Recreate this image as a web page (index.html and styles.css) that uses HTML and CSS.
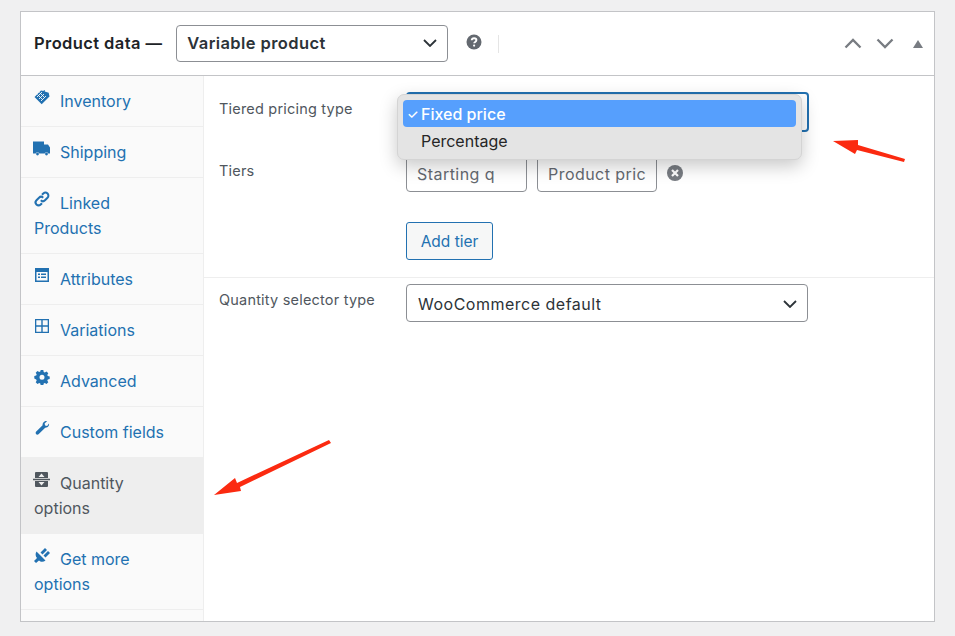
FILE: index.html
```html
<!DOCTYPE html>
<html lang="en">
<head>
<meta charset="utf-8">
<title>Product data</title>
<link rel="stylesheet" href="styles.css">
</head>
<body>
<section class="box">
  <header class="head">
    <h2 class="title">Product data —</h2>
    <div class="select type-select"><span>Variable product</span>
      <svg class="chev" viewBox="0 0 14 8"><path d="M1 1l6 6 6-6"/></svg>
    </div>
    <svg class="help" viewBox="0 0 16 16"><circle cx="8" cy="8" r="7.5"/><path class="q" d="M5.7 6.300C5.800 4.900 6.700 4.200 8.100 4.200c1.400 0 2.300.8 2.300 1.900 0 1.900-2.200 1.700-2.200 3.200"/><circle class="qd" cx="8.100" cy="11.600" r="1.100"/></svg>
    <span class="sep"></span>
    <div class="controls">
      <svg class="ctl" viewBox="0 0 18 11"><path d="M1.500 9.500L9 2l7.500 7.500"/></svg>
      <svg class="ctl" viewBox="0 0 18 11"><path d="M1.500 1.500L9 9l7.500-7.500"/></svg>
      <svg class="tri" viewBox="0 0 10 8"><path d="M5 0l5 8H0z"/></svg>
    </div>
  </header>
  <div class="body">
    <nav class="side">
      <a class="tab"><svg class="ico" viewBox="0 0 16 16"><path d="M7 1.500l2.500.6.500-1.100 1 .4-.3 1.100 4 1.200.8 3.800-7.800 7.800L.5 8z"/><path class="cut" d="M3 8l5-5M5 10l5-5M7 12l5-5M5.500 3.500l5 5M3.500 5.500l5 5"/></svg>Inventory</a>
      <a class="tab"><svg class="ico wide" viewBox="0 0 17 14"><path d="M0 0h11v3h4l2 3v6h-1.700a2 2 0 0 0-3.600 0H6.300a2 2 0 0 0-3.600 0H0z"/><circle cx="4.500" cy="12.500" r="1.400"/><circle cx="13.500" cy="12.500" r="1.400"/></svg>Shipping</a>
      <a class="tab"><svg class="ico line" viewBox="0 0 16 16"><path d="M6.800 9.300a3 3 0 0 0 4.200 0l2.500-2.500a3 3 0 0 0-4.200-4.300L8 3.800"/><path d="M9.200 6.700a3 3 0 0 0-4.200 0l-2.500 2.500a3 3 0 0 0 4.200 4.300L8 12.200"/></svg>Linked Products</a>
      <a class="tab"><svg class="ico" viewBox="0 0 16 16"><path fill-rule="evenodd" d="M1 1h14v14H1zM2.500 5v8.500h11V5zM4 6.500h2V8H4zm3 0h5V8H7zM4 9.500h2V11H4zm3 0h5V11H7z"/></svg>Attributes</a>
      <a class="tab"><svg class="ico" viewBox="0 0 16 16"><path fill-rule="evenodd" d="M1 1h14v14H1zM2.300 2.300v5h5v-5zm6.400 0v5h5v-5zM2.300 8.700v5h5v-5zm6.400 0v5h5v-5z"/></svg>Variations</a>
      <a class="tab"><svg class="ico" viewBox="0 0 16 16"><path fill-rule="evenodd" d="M6.700 1h2.600l.4 1.900 1.100.5 1.700-1 1.800 1.800-1 1.700.5 1.100 1.900.4v2.600l-1.900.4-.5 1.100 1 1.700-1.800 1.800-1.700-1-1.100.5-.4 1.900H6.700l-.4-1.900-1.100-.5-1.700 1-1.800-1.800 1-1.700-.5-1.100L.3 9.600V7l1.900-.4.500-1.100-1-1.700 1.800-1.800 1.700 1 1.100-.5zM8 5.800a2.500 2.500 0 1 0 0 5 2.500 2.500 0 0 0 0-5z"/></svg>Advanced</a>
      <a class="tab"><svg class="ico" viewBox="0 0 16 16"><path d="M15 3.500c.5 2-1.200 4.400-3.800 4.200L4.500 14.300c-1.500 1.300-3.800-.8-2.500-2.500l6.600-6.600C8.300 2.700 11 .6 13 1.200L10.600 3.600l.5 2 2 .5z"/></svg>Custom fields</a>
      <a class="tab active"><svg class="ico wide" viewBox="0 0 17 15"><path d="M3 0h11a1 1 0 0 1 1 1v5H2V1a1 1 0 0 1 1-1zM0 6.800h17v1.400H0zM2 9h13v5a1 1 0 0 1-1 1H3a1 1 0 0 1-1-1z"/><path class="cut" fill-rule="evenodd" d="M8.500 1.500L11.500 5h-6zM5.500 10h6l-3 3.500z"/></svg>Quantity options</a>
      <a class="tab"><svg class="ico" viewBox="0 0 16 16"><path d="M2.500 4.500l9 9c-2.200 1.800-5 1.500-6.500 0L2 16 0 14l3-3C1.500 9.500 1 6.700 2.500 4.500zM6.500 5.500l4.500-4.500 2 2-4.500 4.500zM9.500 8.500l4.500-4.500 2 2-4.500 4.500z"/></svg>Get more options</a>
      <div class="side-end"></div>
    </nav>
    <main class="panel">
      <div class="group">
        <div class="row row-type">
          <label class="lbl">Tiered pricing type</label>
          <div class="select focus"></div>
        </div>
        <div class="row row-tiers">
          <label class="lbl">Tiers</label>
          <div class="tiers">
            <div class="inputs">
              <div class="input qty">Starting q</div>
              <div class="input price">Product pric</div>
              <svg class="remove" viewBox="0 0 16 16"><circle cx="8" cy="8" r="8"/><path d="M5 5l6 6M11 5l-6 6"/></svg>
            </div>
            <a class="btn">Add tier</a>
          </div>
        </div>
      </div>
      <div class="row row-qty">
        <label class="lbl">Quantity selector type</label>
        <div class="select normal"><span>WooCommerce default</span>
          <svg class="chev" viewBox="0 0 14 8"><path d="M1 1l6 6 6-6"/></svg>
        </div>
      </div>
    </main>
  </div>
  <div class="menu">
    <div class="opt sel"><span class="check">✓</span>Fixed price</div>
    <div class="opt">Percentage</div>
  </div>
  <svg class="arrows" viewBox="0 0 955 636">
    <path d="M905 159L904 162 857 150 855 154 833 141 858 140 858 145z"/>
    <path d="M329 440L331 443 240 487 241 491 214 495 235 478 237 483z"/>
  </svg>
</section>
</body>
</html>
```
FILE: styles.css
```css
* { box-sizing: border-box; }
html, body { margin: 0; height: 100%; }
body {
  background: #f0f0f1;
  font-family: Inter, "Liberation Sans", sans-serif;
  color: #50575e;
  padding: 11px 20px 14px;
  overflow: hidden;
}
.box {
  height: 611px;
  background: #fff;
  border: 1px solid #c3c4c7;
  display: flex;
  flex-direction: column;
}
.head {
  height: 64px;
  flex: none;
  border-bottom: 1px solid #c3c4c7;
  display: flex;
  align-items: center;
  padding: 0 11px 0 13px;
  position: relative;
}
.title {
  margin: 0 14px 2px 0;
  font-size: 16.500px;
  letter-spacing: .4px;
  font-weight: 600;
  color: #1d2327;
  white-space: nowrap;
}
.select {
  border: 1px solid #8c8f94;
  border-radius: 4px;
  background: #fff;
  display: flex;
  align-items: center;
  justify-content: space-between;
  color: #2c3338;
}
.type-select {
  width: 272px;
  height: 37px;
  padding: 0 10px 1px;
  font-size: 16.500px;
  letter-spacing: .4px;
  font-weight: 600;
}
.chev { width: 14px; height: 8px; fill: none; stroke: #2c3338; stroke-width: 1.800; }
.help { width: 16px; height: 16px; margin-left: 18px; margin-top: -3px; }
.help circle { fill: #646970; }
.help .q { fill: none; stroke: #fff; stroke-width: 1.900; }
.help circle.qd { fill: #fff; }
.sep { width: 1px; height: 18px; background: #e5e5e5; margin-left: 16px; }
.controls { margin-left: auto; display: flex; align-items: center; }
.ctl { width: 18px; height: 11px; fill: none; stroke: #787c82; stroke-width: 2.300; margin-right: 14px; }
.tri { width: 10px; height: 8px; fill: #787c82; margin-left: 5px; }
.body { flex: 1; display: flex; min-height: 0; }
.side {
  width: 183px;
  flex: none;
  background: #fafafa;
  border-right: 1px solid #eee;
  display: flex;
  flex-direction: column;
}
.tab {
  display: block;
  padding: 13px 33px 12px 13px;
  font-size: 16px;
  line-height: 25px;
  color: #2271b1;
  border-bottom: 1px solid #eee;
}
.tab.active { background: #eee; color: #50575e; border-bottom-color: #eee; }
.side-end { flex: 1; }
.ico {
  width: 16px;
  height: 16px;
  fill: currentColor;
  margin-right: 10px;
  vertical-align: -1px;
  position: relative;
  top: -3px;
}
.ico.wide { width: 17px; height: 15px; margin-right: 10px; margin-left: -1px; }
.ico.line { fill: none; stroke: currentColor; stroke-width: 2; }
.ico .cut { fill: none; stroke: #fafafa; stroke-width: .9; }
.active .ico .cut { fill: #eee; stroke: none; }
.panel { flex: 1; min-width: 0; }
.group { border-bottom: 1px solid #eee; height: 202px; padding-top: 17px; }
.row { display: flex; padding-left: 15px; }
.lbl { width: 187px; flex: none; font-size: 14.500px; letter-spacing: .2px; line-height: 20px; color: #50575e; }
.row-type { height: 62px; }
.row-type .lbl { margin-top: 6px; }
.row-type .select { width: 403px; height: 40px; margin-top: -1px; border: 2px solid #2271b1; }
.row-tiers .lbl { margin-top: 6px; }
.inputs { display: flex; align-items: center; gap: 10px; }
.input {
  height: 37px;
  width: 121px;
  border: 1px solid #8c8f94;
  border-radius: 4px;
  padding: 0 10px;
  font-size: 16px;
  letter-spacing: .45px;
  line-height: 37px;
  color: #646970;
  white-space: nowrap;
  overflow: hidden;
}
.input.price { width: 120px; }
.remove { width: 16px; height: 16px; flex: none; margin-left: 0; margin-top: -1px; }
.remove circle { fill: #787c82; }
.remove path { stroke: #fff; stroke-width: 2.200; fill: none; }
.btn {
  display: inline-block;
  margin-top: 30px;
  height: 38px;
  width: 87px;
  border: 1px solid #2271b1;
  border-radius: 3px;
  background: #f6f7f7;
  color: #2271b1;
  font-size: 15.500px;
  line-height: 38px;
  text-align: center;
}
.row-qty { padding-top: 6px; }
.row-qty .lbl { margin-top: 6px; }
.normal { width: 402px; height: 38px; padding: 1px 10px 0 11px; font-size: 16px; letter-spacing: .5px; }
.menu {
  position: absolute;
  left: 397px;
  top: 94px;
  width: 405px;
  height: 66px;
  background: #e4e4e4;
  border: 1px solid #d4d4d4;
  border-radius: 7px;
  box-shadow: 0 6px 18px rgba(0, 0, 0, .22);
  padding: 5px 5px;
  font-size: 16px;
  color: #262626;
}
.opt { height: 27px; line-height: 28px; padding-left: 18px; position: relative; }
.opt.sel { background: #569ffd; color: #fff; border-radius: 4px; font-weight: 500; }
.check { position: absolute; left: 4px; font-size: 13px; }
.arrows {
  position: absolute;
  left: 0;
  top: 0;
  width: 955px;
  height: 636px;
  fill: #fb2a10;
  pointer-events: none;
}
```
